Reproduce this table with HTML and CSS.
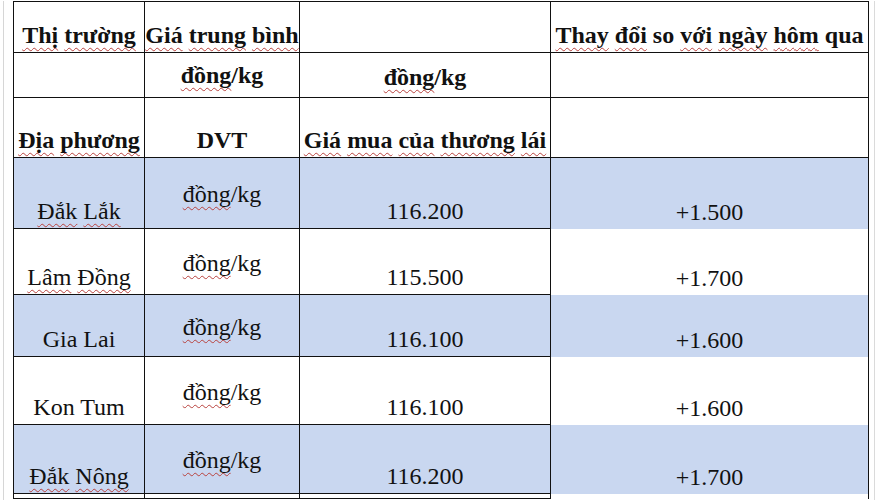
FILE: index.html
```html
<!DOCTYPE html>
<html lang="vi">
<head>
<meta charset="utf-8">
<title>Giá cà phê</title>
<link rel="stylesheet" href="styles.css">
</head>
<body>
<div class="sheet">
  <div class="gutter-left"></div>
  <table class="grid">
    <colgroup><col class="c1"><col class="c2"><col class="c3"><col class="c4"></colgroup>
    <thead>
      <tr class="r-h1">
        <th class="bot"><span class="sp">Thị</span> <span class="sp">trường</span></th>
        <th class="bot"><span class="sp">Giá</span> <span class="sp">trung</span> <span class="sp">bình</span></th>
        <th class="bot"></th>
        <th class="bot"><span class="sp">Thay</span> <span class="sp">đổi</span> so <span class="sp">với</span> <span class="sp">ngày</span> <span class="sp">hôm</span> qua</th>
      </tr>
      <tr class="r-h2">
        <th class="mid"></th>
        <th class="mid"><span class="sp">đồng</span>/kg</th>
        <th class="mid low"><span class="sp">đồng</span>/kg</th>
        <th class="mid"></th>
      </tr>
      <tr class="r-h3">
        <th class="bot"><span class="sp">Địa</span> <span class="sp">phương</span></th>
        <th class="bot">DVT</th>
        <th class="bot"><span class="sp">Giá</span> <span class="sp">mua</span> <span class="sp">của</span> <span class="sp">thương</span> <span class="sp">lái</span></th>
        <th class="bot"></th>
      </tr>
    </thead>
    <tbody>
      <tr class="r-d1 blue">
        <td class="bot"><span class="sp">Đắk</span> <span class="sp">Lắk</span></td>
        <td class="mid unit"><span class="sp">đồng</span>/kg</td>
        <td class="bot">116.200</td>
        <td class="bot chg">+1.500</td>
      </tr>
      <tr class="r-d2">
        <td class="bot"><span class="sp">Lâm</span> <span class="sp">Đồng</span></td>
        <td class="mid unit"><span class="sp">đồng</span>/kg</td>
        <td class="bot">115.500</td>
        <td class="bot chg">+1.700</td>
      </tr>
      <tr class="r-d3 blue">
        <td class="bot">Gia Lai</td>
        <td class="mid unit"><span class="sp">đồng</span>/kg</td>
        <td class="bot">116.100</td>
        <td class="bot chg">+1.600</td>
      </tr>
      <tr class="r-d4">
        <td class="bot">Kon Tum</td>
        <td class="mid unit"><span class="sp">đồng</span>/kg</td>
        <td class="bot">116.100</td>
        <td class="bot chg">+1.600</td>
      </tr>
      <tr class="r-d5 blue">
        <td class="bot"><span class="sp">Đắk</span> <span class="sp">Nông</span></td>
        <td class="mid unit"><span class="sp">đồng</span>/kg</td>
        <td class="bot">116.200</td>
        <td class="bot chg">+1.700</td>
      </tr>
      <tr class="r-d6">
        <td class="empty"></td>
        <td class="empty"></td>
        <td class="empty"></td>
        <td class="empty chg"></td>
      </tr>
    </tbody>
  </table>
  <div class="gutter-right"></div>
</div>
</body>
</html>
```
FILE: styles.css
```css
html, body {
  margin: 0;
  padding: 0;
  background: #ffffff;
}
body {
  height: 500px;
  overflow: hidden;
  font-family: "Liberation Serif", "Times New Roman", serif;
  color: #111111;
}
.sheet {
  display: flex;
  align-items: flex-start;
  padding-top: 1px;
  height: 499px;
  overflow: hidden;
}
.gutter-left {
  align-self: stretch;
  margin-left: 3px;
  width: 9px;
  border-left: 1px solid #d6d6d6;
}
.gutter-right {
  align-self: stretch;
  margin-left: 5px;
  border-left: 1px solid #dadada;
}
table.grid {
  border-collapse: collapse;
  table-layout: fixed;
  width: 855px;
  font-size: 24px;
  flex: none;
}
col.c1 { width: 131px; }
col.c2 { width: 155px; }
col.c3 { width: 251px; }
col.c4 { width: 318px; }

th, td {
  border: 1px solid #111;
  padding: 0 0 3px 0;
  text-align: center;
  white-space: nowrap;
  line-height: normal;
}
th { font-weight: bold; }
td { font-weight: normal; }
.bot { vertical-align: bottom; }
.mid { vertical-align: middle; padding-bottom: 0; }
.low { padding-top: 5px; }
.unit { padding-top: 3px; }
td.empty { padding: 0; line-height: 0; font-size: 0; }

tbody td.chg {
  border-top: none;
  border-bottom: none;
}
tr.blue td { background: #c9d7f0; }

tr.r-h1 { height: 51px; }
tr.r-h2 { height: 45px; }
tr.r-h3 { height: 60px; }
tr.r-d1 { height: 71px; }
tr.r-d2 { height: 66px; }
tr.r-d3 { height: 62px; }
tr.r-d4 { height: 68px; }
tr.r-d5 { height: 69px; }
tr.r-d6 { height: 5px; }

.sp {
  text-decoration: underline wavy #b8423e;
  text-decoration-thickness: 1px;
  text-underline-offset: 4px;
  text-decoration-skip-ink: none;
}
```
